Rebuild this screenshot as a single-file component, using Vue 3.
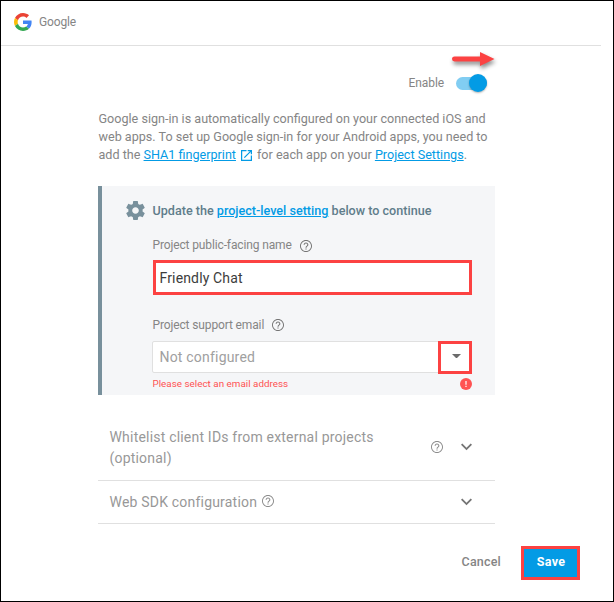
<script setup>
import { ref, h } from 'vue'

const enabled = ref(true)
const projectName = ref('Friendly Chat')

const HelpIcon = () =>
  h('svg', { viewBox: '2 2 20 20', width: 12, height: 12, fill: 'currentColor' }, [
    h('path', {
      d: 'M11 18h2v-2h-2v2zm1-16C6.48 2 2 6.48 2 12s4.48 10 10 10 10-4.48 10-10S17.52 2 12 2zm0 18.4c-4.64 0-8.4-3.76-8.4-8.4s3.76-8.4 8.4-8.4 8.400 3.760 8.400 8.400-3.760 8.400-8.400 8.400zm0-14.400c-2.210 0-4 1.790-4 4h1.800c0-1.210.990-2.200 2.200-2.200s2.200.990 2.200 2.200c0 2-3.100 1.750-3.100 5h1.800c0-2.250 3.100-2.500 3.100-5 0-2.210-1.790-4-4-4z',
    }),
  ])

const Chevron = () =>
  h('svg', { viewBox: '6 8 12 8', width: 11, height: 8, fill: 'currentColor' }, [
    h('path', { d: 'M16.59 8.2L12 12.78 7.41 8.2 6 9.61l6 6 6-6z' }),
  ])
</script>

<template>
  <main class="page">
    <header class="head">
      <svg class="logo" viewBox="0 0 48 48" width="18" height="18">
        <path fill="#EA4335" d="M24 9.5c3.54 0 6.71 1.22 9.21 3.6l6.85-6.85C35.9 2.38 30.47 0 24 0 14.62 0 6.51 5.38 2.56 13.22l7.98 6.19C12.43 13.72 17.74 9.5 24 9.5z" />
        <path fill="#4285F4" d="M46.98 24.55c0-1.57-.15-3.09-.38-4.55H24v9.02h12.94c-.58 2.96-2.26 5.48-4.78 7.18l7.73 6c4.51-4.18 7.09-10.36 7.09-17.65z" />
        <path fill="#FBBC05" d="M10.53 28.59c-.48-1.45-.76-2.99-.76-4.59s.27-3.14.76-4.59l-7.98-6.19C.92 16.46 0 20.12 0 24c0 3.88.92 7.54 2.56 10.78l7.97-6.19z" />
        <path fill="#34A853" d="M24 48c6.48 0 11.93-2.13 15.89-5.81l-7.73-6c-2.15 1.45-4.92 2.3-8.16 2.3-6.26 0-11.57-4.22-13.47-9.91l-7.98 6.19C6.51 42.62 14.62 48 24 48z" />
      </svg>
      <span class="provider">Google</span>
    </header>

    <div class="content">
      <div class="enable">
        <span class="enable-label">Enable</span>
        <button class="toggle" :class="{ on: enabled }" @click="enabled = !enabled"><i></i></button>
        <svg class="pointer" viewBox="0 0 50 24" width="50" height="24">
          <path d="M4.500 6.500H30V2L44.500 9 30 16v-4.500H4.500a2.500 2.500 0 0 1 0-5z" fill="#fc4242" />
        </svg>
      </div>

      <p class="desc">
        Google sign-in is automatically configured on your connected iOS and<br />
        web apps. To set up Google sign-in for your Android apps, you need to<br />
        add the <a>SHA1 fingerprint</a><svg class="ext" viewBox="3 3 18 18" width="11" height="11"><path fill="#039be5" d="M19 19H5V5h7V3H3v18h18v-9h-2v7zM14 3v2h3.590l-9.830 9.830 1.410 1.410L19 6.410V10h2V3h-7z" /></svg>for each app on your <a>Project Settings</a>.
      </p>

      <section class="panel">
        <div class="title">
          <svg class="gear" viewBox="2 2 20 20" width="19" height="19">
            <path fill="#78909c" d="M19.430 12.980c.04-.32.07-.64.07-.98s-.03-.66-.07-.98l2.110-1.650c.19-.15.24-.42.12-.64l-2-3.460c-.12-.22-.39-.3-.61-.22l-2.490 1c-.52-.4-1.080-.73-1.690-.98l-.38-2.650C14.460 2.180 14.250 2 14 2h-4c-.25 0-.46.18-.49.42l-.38 2.650c-.61.25-1.170.59-1.690.98l-2.490-1c-.23-.09-.49 0-.61.22l-2 3.460c-.13.22-.07.49.12.64l2.110 1.650c-.04.32-.07.65-.07.98s.03.66.07.98l-2.110 1.650c-.19.15-.24.42-.12.64l2 3.460c.12.22.39.3.61.22l2.490-1c.52.4 1.080.73 1.690.98l.38 2.650c.03.24.24.42.49.42h4c.25 0 .46-.18.49-.42l.38-2.650c.61-.25 1.170-.59 1.690-.98l2.490 1c.23.09.49 0 .61-.22l2-3.460c.12-.22.07-.49-.12-.64l-2.110-1.650zM12 15.500c-1.930 0-3.500-1.570-3.500-3.500s1.570-3.500 3.500-3.500 3.500 1.570 3.500 3.500-1.570 3.500-3.500 3.500z" />
          </svg>
          <span class="title-text">Update the <a>project-level setting</a> below to continue</span>
        </div>

        <div class="label first-label"><span>Project public-facing name</span><HelpIcon /></div>
        <input v-model="projectName" class="name" type="text" spellcheck="false" />

        <div class="label second"><span>Project support email</span><HelpIcon /></div>
        <div class="select">
          <span class="placeholder">Not configured</span>
          <button class="drop">
            <svg viewBox="0 0 10 5" width="9" height="4.500"><path d="M0 0h10L5 5z" fill="#6b6b6b" /></svg>
          </button>
        </div>
        <div class="error">
          <span>Please select an email address</span>
          <svg viewBox="0 0 12 12" width="12" height="12">
            <circle cx="6" cy="6" r="6" fill="#ff5252" />
            <path d="M5.400 3h1.200v3.700H5.400zM5.400 7.800h1.200V9H5.400z" fill="#fff" />
          </svg>
        </div>
      </section>

      <div class="row first">
        <div class="row-text">Whitelist client IDs from external projects<br />(optional)</div>
        <HelpIcon class="help" />
        <Chevron class="chev" />
      </div>
      <div class="row last">
        <div class="row-text">Web SDK configuration</div>
        <HelpIcon class="help" />
        <Chevron class="chev" />
      </div>
    </div>

    <footer class="actions">
      <button class="cancel">Cancel</button>
      <button class="save">Save</button>
    </footer>
  </main>
</template>

<style>
body {
  background: #fff;
}
</style>

<style scoped>
.page {
  box-sizing: border-box;
  width: 614px;
  height: 602px;
  border: 1px solid #000;
  background: #fff;
  font-family: Roboto, sans-serif;
  color: #858585;
  overflow: hidden;
}
.page * {
  box-sizing: border-box;
}
svg {
  display: block;
  flex: none;
}
button {
  font-family: inherit;
  padding: 0;
  border: 0;
}
a {
  color: #039be5;
  text-decoration: underline;
}
.head {
  width: 600px;
  height: 45px;
  padding: 0 0 3px 13px;
  border-bottom: 1px solid #e0e0e0;
  display: flex;
  align-items: center;
}
.provider {
  margin-left: 7px;
  font-size: 12px;
  letter-spacing: -0.15px;
}
.content {
  width: 397px;
  margin-left: 97px;
}
.enable {
  position: relative;
  height: 63px;
  padding: 11px 8px 0 0;
  display: flex;
  align-items: center;
  justify-content: flex-end;
}
.enable-label {
  font-size: 12px;
  letter-spacing: -0.1px;
  margin-right: 12px;
}
.toggle {
  width: 31px;
  height: 13px;
  border-radius: 7px;
  background: #bdbdbd;
  display: flex;
  align-items: center;
}
.toggle.on {
  background: #81cdf2;
  justify-content: flex-end;
}
.toggle i {
  flex: none;
  width: 18px;
  height: 18px;
  border-radius: 50%;
  background: #039be5;
  box-shadow: 0 1px 2px rgba(0, 0, 0, 0.3);
}
.pointer {
  position: absolute;
  right: -5px;
  top: 4px;
  filter: drop-shadow(1px 3px 2px rgba(0, 0, 0, 0.45));
}
.desc {
  margin: 0;
  height: 77px;
  padding: 1px 0 0 0.5px;
  font-size: 12.6px;
  line-height: 18px;
  white-space: nowrap;
}
.ext {
  display: inline-block;
  vertical-align: -2px;
  margin: 0 5px 0 5px;
}
.panel {
  height: 209px;
  border-left: 4px solid #78909c;
  background: #f5f6f8;
  padding: 14px 23px 0 50px;
}
.title {
  display: flex;
  align-items: center;
  height: 21px;
  margin-left: -27px;
}
.gear {
  margin: -1px 0 0 0.5px;
}
.title-text {
  margin-left: 8px;
  font-size: 12.6px;
  font-weight: 500;
  color: #607d8b;
  white-space: nowrap;
}
.label {
  height: 15px;
  margin-top: 17px;
  margin-bottom: 7px;
  display: flex;
  align-items: center;
  gap: 8px;
  font-size: 12px;
  letter-spacing: -0.13px;
  padding-left: 0.5px;
  color: #757575;
}
.label span {
  color: #858585;
}
.first-label span {
  padding-bottom: 2px;
}
.name {
  display: block;
  width: 319px;
  height: 35px;
  margin-left: 1px;
  padding: 0 0 0 3.5px;
  border: 3px solid #fc4242;
  background: #fff;
  font: 400 14px Roboto, sans-serif;
  letter-spacing: 0.15px;
  color: #3c3c3c;
  outline: none;
}
.label.second {
  margin-top: 22px;
  margin-bottom: 9px;
}
.select {
  height: 32px;
  border: 1px solid #e0e0e0;
  border-radius: 2px;
  background: #fff;
  display: flex;
  align-items: center;
  padding-left: 6.5px;
}
.placeholder {
  font-size: 14px;
  letter-spacing: 0.2px;
  color: #a0a0a0;
}
.drop {
  margin: 0 -1px -1px auto;
  width: 34px;
  height: 33px;
  border: 3px solid #fc4242;
  background: #fff;
  display: flex;
  align-items: center;
  justify-content: center;
  padding: 0 0 3px 2px;
}
.error {
  display: flex;
  align-items: center;
  justify-content: space-between;
  height: 12px;
  margin-top: 5px;
  padding: 0 0.5px 0 0.5px;
  font-size: 9.8px;
  letter-spacing: 0.03px;
  color: #ff5252;
}
.error span {
  padding-bottom: 2px;
}
.row {
  display: flex;
  align-items: center;
  padding: 0 23px 0 11.5px;
  border-bottom: 1px solid #e0e0e0;
  font-size: 14px;
  letter-spacing: 0.2px;
  line-height: 21px;
  color: #989898;
}
.help {
  color: #8c8c8c;
}
.chev {
  margin-left: 18px;
  color: #757575;
}
.first {
  height: 86px;
  padding-top: 19px;
}
.first .row-text {
  padding-top: 2px;
}
.first .help {
  margin-left: auto;
}
.last {
  height: 43px;
}
.last .help {
  margin-left: 5px;
  margin-bottom: 2px;
}
.last .chev {
  margin-left: auto;
  margin-bottom: 1px;
}
.actions {
  display: flex;
  justify-content: flex-end;
  align-items: center;
  margin: 22px 33px 0 0;
  gap: 20px;
}
.cancel {
  background: none;
  font-size: 12.5px;
  letter-spacing: 0.2px;
  font-weight: 500;
  color: #858585;
  padding-bottom: 3px;
}
.save {
  width: 59px;
  height: 34px;
  border: 3px solid #fc4242;
  background: #039be5;
  color: #fff;
  font-size: 12.5px;
  letter-spacing: 0.3px;
  font-weight: 700;
  padding: 0 0 3px 1px;
}
</style>
